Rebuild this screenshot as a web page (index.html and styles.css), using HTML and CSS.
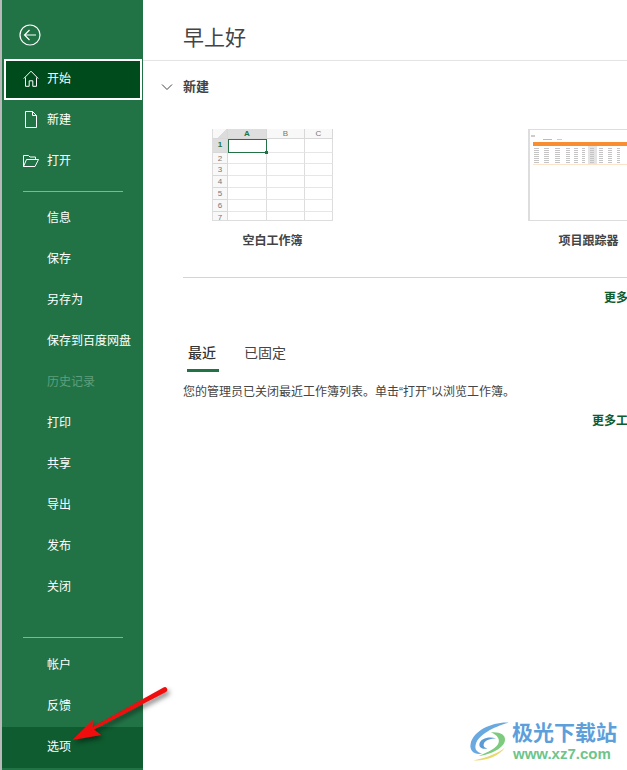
FILE: index.html
```html
<!DOCTYPE html>
<html lang="zh">
<head>
    <meta charset="utf-8">
    <title>Excel 开始</title>
    <link rel="stylesheet" href="styles.css">
</head>
<body>
    <div class="app">
        <nav class="side">
            <div class="back">
                <svg width="24" height="24" viewBox="0 0 24 24" fill="none" stroke="#fff" stroke-width="1.2">
                    <circle cx="12" cy="12" r="10"/>
                    <path d="M18 12H6.500M11.500 7l-5 5 5 5"/>
                </svg>
            </div>
            <a class="item current">
                <svg class="ico" width="16" height="17" viewBox="0 0 16 17" fill="none" stroke="#fff" stroke-width="1">
                    <path d="M.8 8.500 8 1.200l7.200 7.300M2.500 7.500v8.800h3.700v-5.500h3.600v5.500h3.700V7.500"/>
                </svg>
                开始
            </a>
            <a class="item">
                <svg class="ico" width="16" height="17" viewBox="0 0 16 17" fill="none" stroke="#fff" stroke-width="1">
                    <path d="M2.500.5h7l4 4v12h-11zM9.500.5v4h4"/>
                </svg>
                新建
            </a>
            <a class="item">
                <svg class="ico" width="16" height="17" viewBox="0 0 16 17" fill="none" stroke="#fff" stroke-width="1">
                    <path d="M.5 14.500V3.500h5l1.500 1.500h5.500v2.500M.5 14.500h11.500l3.500-7H3.500z"/>
                </svg>
                打开
            </a>
            <div class="rule rule-top"></div>
            <a class="item">信息</a>
            <a class="item">保存</a>
            <a class="item">另存为</a>
            <a class="item">保存到百度网盘</a>
            <a class="item off">历史记录</a>
            <a class="item">打印</a>
            <a class="item">共享</a>
            <a class="item">导出</a>
            <a class="item">发布</a>
            <a class="item">关闭</a>
            <div class="rule rule-bottom"></div>
            <a class="item">帐户</a>
            <a class="item">反馈</a>
            <a class="item hover">选项</a>
        </nav>

        <main class="main">
            <h1 class="greet">早上好</h1>
            <div class="content">
                <div class="new-head">
                    <svg width="12" height="8" viewBox="0 0 12 8" fill="none" stroke="#444" stroke-width="1">
                        <path d="M1 1.500l5 5 5-5"/>
                    </svg>
                    <span>新建</span>
                </div>

                <div class="templates">
                    <div class="tpl tpl-blank">
                        <div class="sheet">
                            <div class="sh corner"></div><div class="sh on">A</div><div class="sh">B</div><div class="sh">C</div>
                            <div class="rh on">1</div><div class="cell cell-sel"></div><div class="cell"></div><div class="cell"></div>
                            <div class="rh">2</div><div class="cell"></div><div class="cell"></div><div class="cell"></div>
                            <div class="rh">3</div><div class="cell"></div><div class="cell"></div><div class="cell"></div>
                            <div class="rh">4</div><div class="cell"></div><div class="cell"></div><div class="cell"></div>
                            <div class="rh">5</div><div class="cell"></div><div class="cell"></div><div class="cell"></div>
                            <div class="rh">6</div><div class="cell"></div><div class="cell"></div><div class="cell"></div>
                            <div class="rh">7</div><div class="cell"></div><div class="cell"></div><div class="cell"></div>
                        </div>
                        <div class="tpl-name">空白工作簿</div>
                    </div>
                    <div class="tpl tpl-tracker">
                        <div class="tracker">
                            <svg width="100" height="92" viewBox="0 0 100 92">
                                <defs>
                                    <pattern id="rows" width="4" height="2" patternUnits="userSpaceOnUse">
                                        <rect width="4" height="1" fill="#c4c4c4"/>
                                    </pattern>
                                </defs>
                                <rect x="1" y="5" width="4" height="2" fill="#ccc"/>
                                <rect x="13" y="9" width="9" height="1" fill="#bbb"/>
                                <rect x="27" y="9" width="5" height="1" fill="#ccc"/>
                                <rect x="3" y="12" width="97" height="4" fill="#f78f32"/>
                                <rect x="58" y="16" width="9" height="18" fill="#e4e4e4"/>
                                <rect x="4" y="17" width="5" height="17" fill="url(#rows)"/>
                                <rect x="14" y="17" width="5" height="17" fill="url(#rows)"/>
                                <rect x="25" y="17" width="5" height="17" fill="url(#rows)"/>
                                <rect x="36" y="17" width="4" height="17" fill="url(#rows)"/>
                                <rect x="44" y="17" width="4" height="17" fill="url(#rows)"/>
                                <rect x="52" y="17" width="3" height="17" fill="url(#rows)"/>
                                <rect x="60" y="17" width="4" height="17" fill="url(#rows)"/>
                                <rect x="69" y="17" width="4" height="17" fill="url(#rows)"/>
                                <rect x="78" y="17" width="4" height="17" fill="url(#rows)"/>
                                <rect x="87" y="17" width="3" height="17" fill="url(#rows)"/>
                                <rect x="3" y="34" width="97" height="1" fill="#fbe3cc"/>
                            </svg>
                        </div>
                        <div class="tpl-name">项目跟踪器</div>
                    </div>
                </div>

                <div class="more more-tpl"><a>更多模板</a></div>

                <div class="tabs">
                    <a class="tab tab-on">最近</a>
                    <a class="tab">已固定</a>
                </div>
                <p class="notice">您的管理员已关闭最近工作簿列表。单击“打开”以浏览工作簿。</p>
                <div class="more more-wb"><a>更多工作簿</a></div>
            </div>
        </main>
    </div>

    <!-- red arrow drawn over the screenshot -->
    <svg class="arrow" width="180" height="90" viewBox="0 0 180 90">
        <defs>
            <filter id="sh" x="-20%" y="-20%" width="140%" height="140%">
                <feDropShadow dx="2" dy="3" stdDeviation="2.500" flood-color="#000" flood-opacity=".5"/>
            </filter>
        </defs>
        <path d="M72 60 93 40 92.500 47 163.500 7.500a2.600 2.600 0 0 1 3 4.200L94 49.500 101 55z" fill="#f00c0c" filter="url(#sh)"/>
    </svg>

    <div class="mark">
        <svg width="44" height="44" viewBox="0 0 50 50" fill="none">
            <path d="M46 3C28 2 6 12 3 27c-2 9 6 13 13 11-6-1-9-5-7-11C12 17 28 8 46 3z" fill="#6aa9e0"/>
            <path d="M32 21c-8-3-18 0-19 6-1 5 5 7 9 5-3 0-5-2-4-5 1-4 8-6 14-6z" fill="#5b9bd5"/>
            <path d="M26 14c9-1 17 2 16 9-1 9-16 16-30 18 9-4 22-9 23-16 1-5-4-9-9-11z" fill="#7ccb7e"/>
            <path d="M6 46c14 1 30-5 36-15-6 6-20 12-36 15z" fill="#e9d96c"/>
        </svg>
        <div class="mark-text">
            <div class="mark-cn">极光下载站</div>
            <div class="mark-en">www.xz7.com</div>
        </div>
    </div>
</body>
</html>
```

FILE: styles.css
```css
html, body {
    margin: 0;
    padding: 0;
    height: 100%;
    overflow: hidden;
    background: #fff;
}
body {
    font-family: "Microsoft YaHei", "Noto Sans CJK SC", "Liberation Sans", sans-serif;
    font-size: 12px;
    color: #333;
    position: relative;
}
.app {
    display: flex;
    height: 770px;
    border-left: 2px solid #b9b9b9;
    box-sizing: border-box;
}

/* left menu */
.side {
    width: 141px;
    flex: none;
    background: #217346;
    color: #fff;
    display: flex;
    flex-direction: column;
    padding-top: 18px;
    box-sizing: border-box;
}
.back {
    height: 41px;
    padding-left: 16px;
    box-sizing: border-box;
    padding-top: 5px;
}
.item {
    height: 41px;
    flex: none;
    display: flex;
    align-items: center;
    padding-left: 45px;
    padding-bottom: 5px;
    position: relative;
    box-sizing: border-box;
    font-size: 12px;
}
.ico {
    position: absolute;
    left: 21px;
    top: 11px;
}
.current {
    background: #004b1c;
    border: 2px solid #fff;
    margin-left: 2px;
    margin-right: 1px;
    padding-left: 41px;
}
.current .ico {
    left: 17px;
    top: 9px;
}
.off {
    color: #5f9e7c;
}
.hover {
    background: #0e5c2f;
}
.rule {
    height: 1px;
    background: #7fb59a;
    margin-left: 21px;
    width: 100px;
    flex: none;
}
.rule-top {
    margin-top: 9px;
    margin-bottom: 6px;
}
.rule-bottom {
    margin-top: 29px;
    margin-bottom: 7px;
}

/* right side */
.main {
    flex: 1;
    min-width: 0;
    overflow: hidden;
}
.greet {
    margin: 0;
    height: 61px;
    box-sizing: border-box;
    border-bottom: 1px solid #e3e3e3;
    font-size: 21px;
    font-weight: 400;
    line-height: 30px;
    padding: 21px 0 0 40px;
    color: #444;
}
.content {
    width: 469px;
    margin-left: 40px;
}
.new-head {
    height: 52px;
    display: flex;
    align-items: center;
    font-size: 13px;
    font-weight: 700;
    color: #444;
    position: relative;
}
.new-head svg {
    position: absolute;
    left: -22px;
    top: 22px;
}
.new-head span {
    margin-top: -3px;
}
.templates {
    display: flex;
    margin-top: 16px;
    height: 148px;
    border-bottom: 1px solid #d4d4d4;
}
.tpl {
    flex: none;
}
.tpl-blank {
    width: 121px;
    margin-left: 29px;
}
.tpl-tracker {
    width: 121px;
    margin-left: 195px;
}
.tpl-name {
    text-align: center;
    font-size: 12px;
    font-weight: 700;
    color: #444;
    margin-top: 10px;
    line-height: 18px;
}

/* little blank worksheet */
.sheet {
    display: grid;
    grid-template-columns: 15px 39px 38px 28px;
    grid-template-rows: 10px 14px 11px 12px 12px 12px 12px 9px;
    height: 92px;
    width: 121px;
    overflow: hidden;
    font-size: 8px;
    font-family: "Liberation Sans", sans-serif;
    color: #777;
    border-left: 1px solid #ddd;
    border-bottom: 1px solid #ddd;
    box-sizing: border-box;
}
.sh, .rh {
    background: #f8f8f8;
    border-right: 1px solid #d8d8d8;
    border-bottom: 1px solid #d8d8d8;
    text-align: center;
    line-height: 10px;
    box-sizing: border-box;
}
.rh {
    line-height: 12px;
}
.corner {
    background: linear-gradient(135deg, #f8f8f8 60%, #dcdcdc 60%);
}
.sh.on, .rh.on {
    background: #dedede;
    color: #217346;
    font-weight: 700;
}
.cell {
    border-right: 1px solid #ddd;
    border-bottom: 1px solid #e6e6e6;
    box-sizing: border-box;
}
.cell-sel {
    border: 1px solid #217346;
    position: relative;
}
.cell-sel::after {
    content: "";
    position: absolute;
    right: -2px;
    bottom: -2px;
    width: 3px;
    height: 3px;
    background: #217346;
}
.tracker {
    width: 121px;
    height: 92px;
    border: 1px solid #ddd;
    border-left: 2px solid #ddd;
    box-sizing: border-box;
    overflow: hidden;
}
.tracker svg {
    display: block;
}

/* links */
.more {
    text-align: right;
    font-size: 12px;
    font-weight: 700;
    color: #0e5c2f;
    line-height: 18px;
}
.more-tpl {
    margin-top: 10px;
}
.more-wb {
    margin-top: 10px;
}

/* tabs */
.tabs {
    display: flex;
    margin-top: 36px;
    padding-left: 4px;
    gap: 25px;
    font-size: 14px;
}
.tab {
    padding-bottom: 7px;
    line-height: 20px;
    color: #444;
}
.tab-on {
    color: #333;
    font-weight: 500;
    border-bottom: 3px solid #217346;
    padding: 0 3px 7px 1px;
}
.notice {
    margin: 11px 0 0;
    font-family: "Liberation Sans", "Noto Sans CJK SC", sans-serif;
    font-size: 12px;
    line-height: 18px;
    color: #444;
    white-space: nowrap;
}

/* overlays on top of the screenshot */
.arrow {
    position: absolute;
    left: 0;
    top: 680px;
}
.mark {
    position: absolute;
    left: 468px;
    top: 720px;
    display: flex;
    gap: 0;
}
.mark-text {
    margin-top: -2px;
}
.mark-cn {
    font-size: 21px;
    font-weight: 700;
    line-height: 26px;
    color: #5d9fdb;
    white-space: nowrap;
}
.mark-en {
    font-family: "Liberation Sans", sans-serif;
    font-size: 15px;
    font-weight: 700;
    line-height: 18px;
    color: #6cc58a;
    margin-top: 1px;
    margin-left: 1px;
}
```
